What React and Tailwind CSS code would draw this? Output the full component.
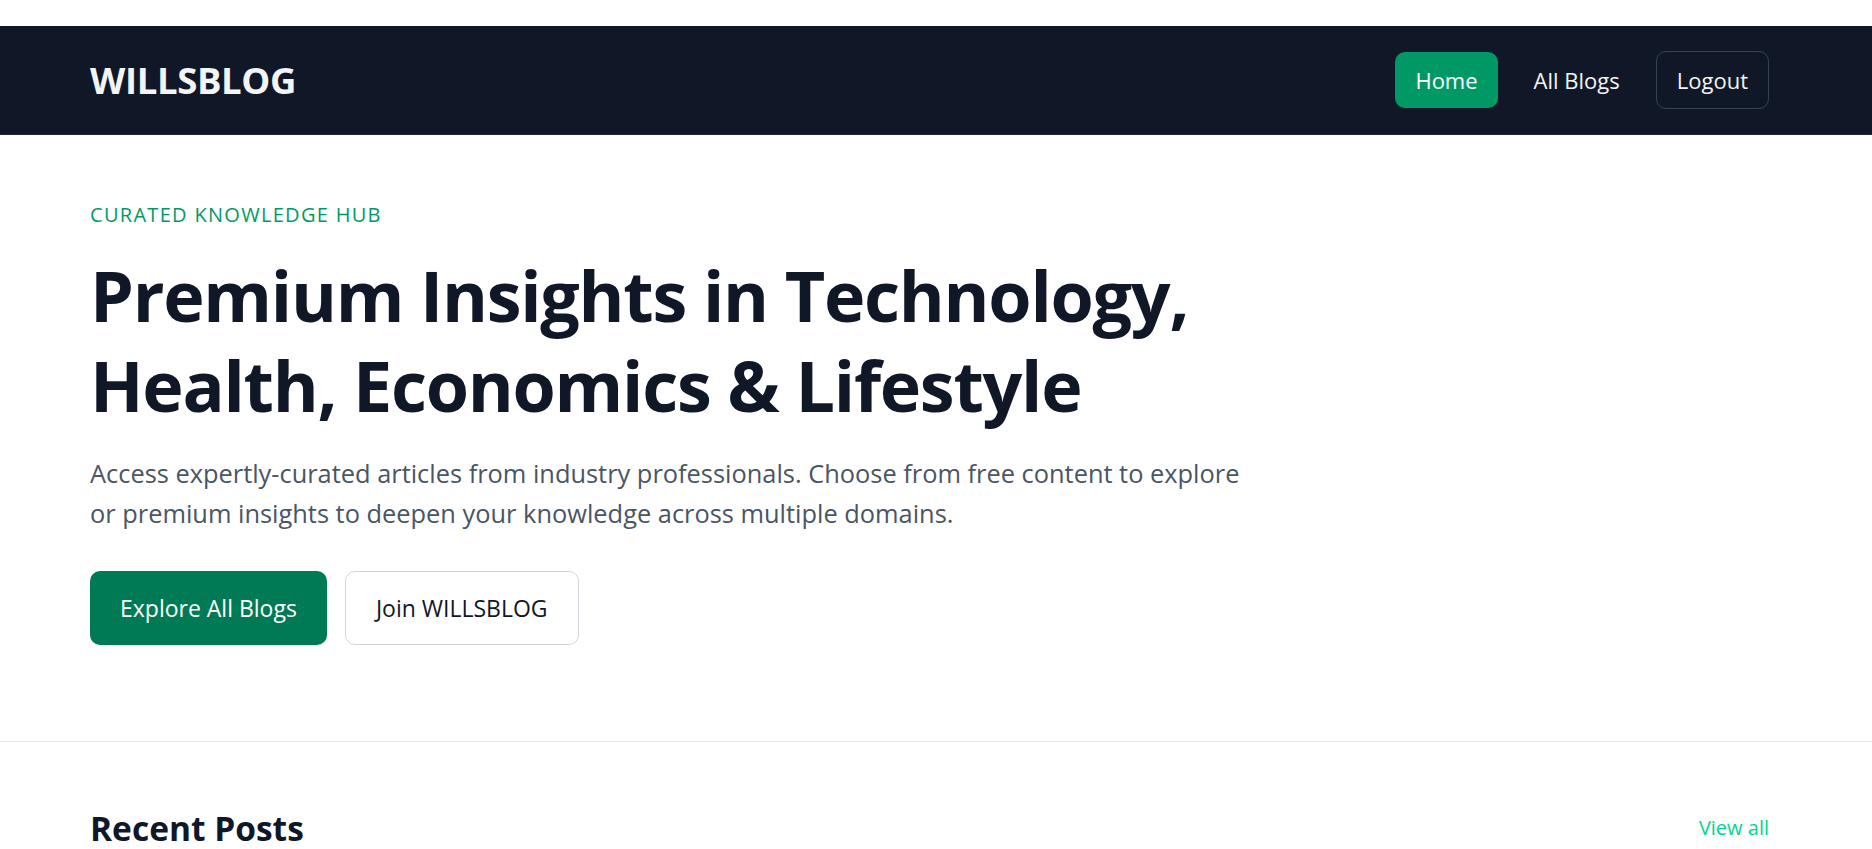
export default function App() {
  const navLinks = [
    { label: 'Home', active: true },
    { label: 'All Blogs' },
  ]

  return (
    <div className="min-h-screen bg-white font-['Open_Sans',sans-serif]">
      {/* top spacer */}
      <div className="h-[26px] bg-white" />

      {/* Navbar */}
      <nav className="h-[109px] bg-gray-900 border-b border-gray-800">
        <div className="h-full pl-[90px] pr-[103px] flex items-center justify-between">
          <span className="text-[36.5px] font-bold text-gray-100 tracking-[-0.01em]">WILLSBLOG</span>
          <div className="flex items-center gap-[16px]">
            {navLinks.map((link) => (
              <a
                key={link.label}
                className={`h-[56px] px-[20px] flex items-center rounded-[10px] text-[22px] text-gray-100 ${link.active ? 'bg-emerald-600 text-white' : ''}`}
              >
                {link.label}
              </a>
            ))}
            <button className="h-[58px] px-[20px] flex items-center rounded-[10px] border border-gray-700 text-[22px] text-gray-100">
              Logout
            </button>
          </div>
        </div>
      </nav>

      {/* Hero */}
      <section className="pl-[90px] pr-[103px] pt-[66px] pb-[96px] border-b border-gray-200">
        <p className="text-[20px] leading-[28px] font-medium tracking-[0.065em] text-emerald-600 uppercase">
          Curated Knowledge Hub
        </p>
        <h1 className="mt-[21px] text-[70px] leading-[90px] font-bold text-gray-900 tracking-[-0.018em]">
          Premium Insights in Technology,
          <br />
          Health, Economics &amp; Lifestyle
        </h1>
        <p className="mt-[23px] text-[25.4px] leading-[40px] text-gray-600">
          Access expertly-curated articles from industry professionals. Choose from free content to explore
          <br />
          or premium insights to deepen your knowledge across multiple domains.
        </p>
        <div className="mt-[38px] flex items-center gap-[18px]">
          <a className="h-[74px] px-[30px] flex items-center rounded-[10px] bg-emerald-700 text-white text-[23px]">
            Explore All Blogs
          </a>
          <a className="h-[74px] px-[30px] flex items-center rounded-[10px] border border-gray-300 bg-white text-gray-900 text-[23px]">
            Join WILLSBLOG
          </a>
        </div>
      </section>

      {/* Recent Posts */}
      <section className="pl-[90px] pr-[103px] pt-[66px]">
        <div className="flex items-center justify-between">
          <h2 className="text-[33.5px] leading-[40px] font-bold text-gray-900">Recent Posts</h2>
          <a className="text-[20px] text-emerald-400">View all</a>
        </div>
      </section>
    </div>
  )
}
